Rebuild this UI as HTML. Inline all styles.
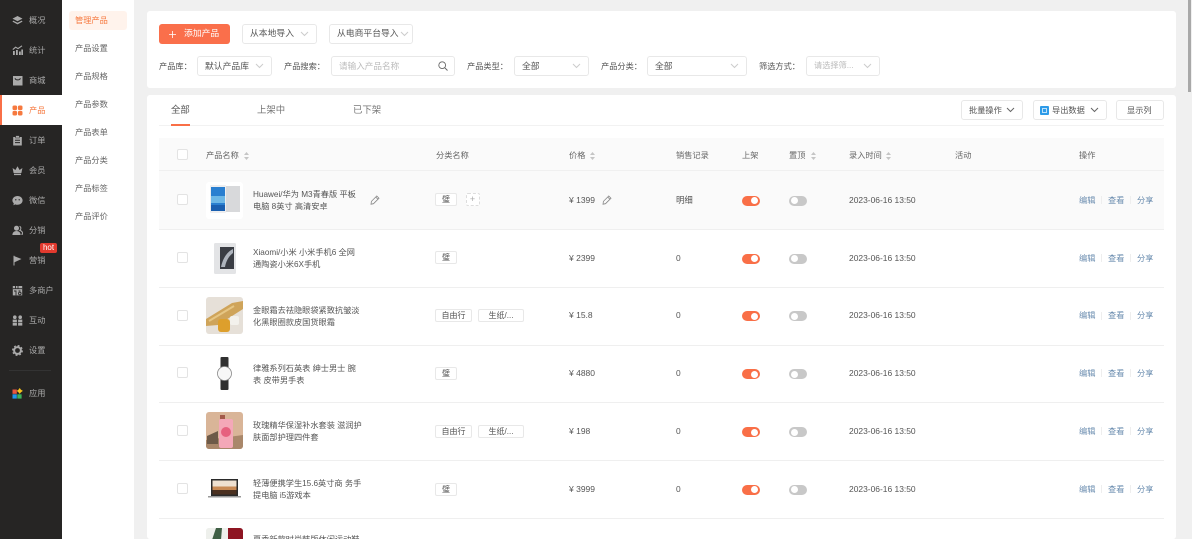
<!DOCTYPE html>
<html lang="zh">
<head>
<meta charset="utf-8">
<title>产品管理</title>
<style>
*{box-sizing:border-box}
html,body{margin:0;padding:0;width:1192px;height:539px;overflow:hidden}
body{position:relative;background:#f0f0f0;font-family:"Liberation Sans","Noto Sans CJK SC",sans-serif;font-size:8.4px;color:#555}
.a{position:absolute}
.t{position:absolute;white-space:nowrap;line-height:12px}
.side{position:absolute;left:0;top:0;width:62px;height:539px;background:#262524}
.ni{position:absolute;left:29px;font-size:8.2px;line-height:12px;color:#aaa;white-space:nowrap;margin-top:1px}
.ic{position:absolute;left:12px;width:11px;height:11px}
.sub{position:absolute;left:62px;top:0;width:72px;height:539px;background:#fff}
.si{position:absolute;left:75px;font-size:8.2px;line-height:12px;color:#666;white-space:nowrap;margin-top:1px}
.card{position:absolute;background:#fff;border-radius:3px}
.sel{position:absolute;height:20px;background:#fff;border:1px solid #e8e8e8;border-radius:3px;line-height:18px;padding-left:7px;font-size:8.8px;color:#555;white-space:nowrap}
.sel svg{position:absolute;right:7px;top:6px}
.lb{position:absolute;top:61px;line-height:12px;font-size:8.2px;color:#555;white-space:nowrap}
.th{position:absolute;top:150px;line-height:12px;font-size:8.2px;color:#666;white-space:nowrap}
.sort{position:absolute;top:152px;width:5px;height:8px}
.sep{position:absolute;left:159px;width:1005px;height:1px;background:#efefef}
.cb{position:absolute;left:177px;width:11px;height:11px;border:1px solid #e3e3e3;border-radius:2px;background:#fff}
.im{position:absolute;left:206px;width:37px;height:37px;border-radius:3px;overflow:hidden}
.nm{position:absolute;left:253px;line-height:12px;font-size:8.2px;color:#555;white-space:nowrap;margin-top:1px}
.tag{position:absolute;height:13px;border:1px solid #e8e8e8;border-radius:2px;background:#fff;line-height:11px;font-size:8px;color:#555;text-align:center;white-space:nowrap}
.pr{position:absolute;left:569px;line-height:12px;font-size:8.5px;color:#555;white-space:nowrap}
.sa{position:absolute;left:676px;line-height:12px;font-size:8.4px;color:#555}
.sw{position:absolute;width:17.5px;height:10px;border-radius:5px}
.sw i{position:absolute;top:1.5px;width:7px;height:7px;border-radius:50%;background:#fff}
.on{left:742px;background:#f96f47}.on i{right:1.5px}
.off{left:789px;background:#c8c8c8}.off i{left:1.5px}
.dt{position:absolute;left:849px;line-height:12px;font-size:8.45px;color:#555;white-space:nowrap}
.op{position:absolute;line-height:12px;font-size:8.2px;color:#6a8caf;white-space:nowrap;margin-top:1px}
.dv{position:absolute;width:1px;height:8px;background:#eee}
</style>
</head>
<body>

<div class="side"></div>
<svg class="ic" style="top:15px" viewBox="0 0 11 11"><path d="M5.5 1 10.5 3.6 5.5 6.2.5 3.6Z" fill="#aaa"/><path d="M1.2 5.6 5.5 7.8 9.8 5.6 10.5 6.6 5.5 9.4.5 6.6Z" fill="#aaa"/></svg>
<div class="ni" style="top:14px">概况</div>
<svg class="ic" style="top:45px" viewBox="0 0 11 11"><path d="M1 6h1.8v4H1zM4 5h1.8v5H4zM7 6.5h1.8V10H7zM9.3 4.5H11V10H9.3z" fill="#aaa"/><path d="M.8 4.6 3.6 2.2 6 3.6 10 .8" fill="none" stroke="#aaa" stroke-width="1.1"/></svg>
<div class="ni" style="top:44px">统计</div>
<svg class="ic" style="top:75px" viewBox="0 0 11 11"><path d="M1 1h9.5v9.5H1Z" fill="#aaa"/><path d="M3 3.2C3.6 5.4 7.8 5.4 8.4 3.2" fill="none" stroke="#262524" stroke-width="1"/></svg>
<div class="ni" style="top:74px">商城</div>

<div class="a" style="left:0;top:95px;width:62px;height:30px;background:#fff"></div>
<div class="a" style="left:0;top:95px;width:1.5px;height:30px;background:#f96f47"></div>
<svg class="ic" style="top:105px" viewBox="0 0 11 11"><g fill="#f6793f"><rect x=".5" y=".5" width="4.6" height="4.6" rx="1.6"/><rect x="5.9" y=".5" width="4.6" height="4.6" rx="1.6"/><rect x=".5" y="5.9" width="4.6" height="4.6" rx="1.6"/><rect x="5.9" y="5.9" width="4.6" height="4.6" rx="1.6"/></g></svg>
<div class="ni" style="top:104px;color:#f6793f">产品</div>

<svg class="ic" style="top:135px" viewBox="0 0 11 11"><path d="M1.2 2h8.6v8.5H1.2Z" fill="#aaa"/><rect x="3.6" y=".6" width="3.8" height="2.4" fill="#aaa" stroke="#262524" stroke-width=".5"/><path d="M3 5.2h5M3 7.6h5" stroke="#262524"/></svg>
<div class="ni" style="top:134px">订单</div>
<svg class="ic" style="top:165px" viewBox="0 0 11 11"><path d="M1.6 8 .6 3 3.4 5 5.5 1.2 7.6 5 10.4 3 9.4 8Z" fill="#aaa"/><rect x="2" y="8.7" width="7" height="1.4" fill="#aaa"/></svg>
<div class="ni" style="top:164px">会员</div>
<svg class="ic" style="top:195px" viewBox="0 0 11 11"><path d="M5.5 1C8.4 1 10.6 3 10.6 5.4S8.4 9.8 5.5 9.8C4.7 9.8 4 9.7 3.4 9.4L1.4 10.2 1.8 8.300C.9 7.500.4 6.500.4 5.400.4 3 2.600 1 5.500 1Z" fill="#aaa"/><circle cx="3.800" cy="4.800" r=".7" fill="#262524"/><circle cx="7.200" cy="4.800" r=".7" fill="#262524"/></svg>
<div class="ni" style="top:194px">微信</div>
<svg class="ic" style="top:225px" viewBox="0 0 11 11"><circle cx="4.500" cy="3.200" r="2.500" fill="#aaa"/><path d="M.4 10C.4 7.400 2.200 6 4.500 6S8.600 7.400 8.600 10Z" fill="#aaa"/><path d="M7.600 1.200A2.500 2.500 0 0 1 7.800 5.400C9.600 5.900 10.700 7.300 10.700 9.200H9.300" fill="none" stroke="#aaa"/></svg>
<div class="ni" style="top:224px">分销</div>
<svg class="ic" style="top:255px" viewBox="0 0 11 11"><path d="M1.500.8h1V10.500h-1Z" fill="#aaa"/><path d="M2.500 1.300 9.500 4 2.500 7.200Z" fill="#aaa"/></svg>
<div class="ni" style="top:254px">营销</div>
<div class="a" style="left:40px;top:243px;width:17px;height:10px;background:#e23a2e;border-radius:2px;color:#fff;font-size:8px;line-height:10px;text-align:center">hot</div>
<svg class="ic" style="top:285px" viewBox="0 0 11 11"><path d="M.8 1h9.400v9.400H.8Z" fill="#aaa"/><path d="M3.500 1v2.500M6 1v2.500M.8 3.700h9.400M4 10.400V6H2M6.500 6h2M6.500 8.500a1.300 1.300 0 1 0 2.600 0 1.300 1.300 0 1 0-2.600 0" fill="none" stroke="#262524" stroke-width=".9"/></svg>
<div class="ni" style="top:284px">多商户</div>
<svg class="ic" style="top:315px" viewBox="0 0 11 11"><g fill="#aaa"><circle cx="2.800" cy="2.200" r="1.800"/><circle cx="8.200" cy="2.200" r="1.800"/><rect x=".7" y="4.600" width="4.200" height="2.600"/><rect x="6.100" y="4.600" width="4.200" height="2.600"/><rect x=".7" y="7.800" width="4.200" height="2.800"/><rect x="6.100" y="7.800" width="4.200" height="2.800"/></g></svg>
<div class="ni" style="top:314px">互动</div>
<svg class="ic" style="top:345px" viewBox="0 0 11 11"><circle cx="5.500" cy="5.500" r="3.400" fill="none" stroke="#aaa" stroke-width="2"/><circle cx="5.500" cy="5.500" r="4.800" fill="none" stroke="#aaa" stroke-width="1.300" stroke-dasharray="1.900 1.870"/></svg>
<div class="ni" style="top:344px">设置</div>
<div class="a" style="left:9px;top:370px;width:42px;height:1px;background:#333"></div>
<svg class="ic" style="top:388px" viewBox="0 0 11 11"><rect x=".5" y="1.500" width="4.300" height="4.300" fill="#e8563f"/><rect x=".5" y="6.300" width="4.300" height="4.300" fill="#1f96ea"/><rect x="5.300" y="6.300" width="4.300" height="4.300" fill="#3cb35b"/><path d="M7.700 0 9 1.700 10.900 2.900 9 4.200 7.700 5.900 6.400 4.200 4.700 2.900 6.400 1.700Z" fill="#f7c21b"/></svg>
<div class="ni" style="top:387px">应用</div>

<div class="sub"></div>
<div class="a" style="left:69px;top:11px;width:58px;height:19px;background:#fff3ec;border-radius:3px"></div>
<div class="si" style="top:14px;color:#f6793f">管理产品</div>
<div class="si" style="top:42px">产品设置</div>
<div class="si" style="top:70px">产品规格</div>
<div class="si" style="top:98px">产品参数</div>
<div class="si" style="top:126px">产品表单</div>
<div class="si" style="top:154px">产品分类</div>
<div class="si" style="top:182px">产品标签</div>
<div class="si" style="top:210px">产品评价</div>

<div class="card" style="left:147px;top:11px;width:1029px;height:77px"></div>
<div class="card" style="left:147px;top:95px;width:1029px;height:444px"></div>
<div class="a" style="left:1188px;top:0;width:3px;height:92px;background:#a8a8a8"></div>

<div class="a" style="left:159px;top:24px;width:71px;height:20px;background:#fa6f4b;border-radius:3px;color:#fff;line-height:19px;font-size:8.8px"><svg class="a" style="left:10px;top:7px" width="7" height="7" viewBox="0 0 7 7"><path d="M3.500 0V7M0 3.500H7" stroke="#fff" stroke-width=".8"/></svg><span class="a" style="left:25px;top:0;white-space:nowrap">添加产品</span></div>
<div class="sel" style="left:242px;top:24px;width:75px;line-height:17px">从本地导入<svg width="9" height="6" viewBox="0 0 9 6"><path d="M1 1 4.500 4.500 8 1" fill="none" stroke="#ccc"/></svg></div>
<div class="sel" style="left:329px;top:24px;width:84px;line-height:17px">从电商平台导入<svg style="right:3px" width="9" height="6" viewBox="0 0 9 6"><path d="M1 1 4.500 4.500 8 1" fill="none" stroke="#ccc"/></svg></div>

<div class="lb" style="left:159px">产品库：</div>
<div class="sel" style="left:197px;top:56px;width:75px">默认产品库<svg width="9" height="6" viewBox="0 0 9 6"><path d="M1 1 4.500 4.500 8 1" fill="none" stroke="#ccc"/></svg></div>
<div class="lb" style="left:284px">产品搜索：</div>
<div class="sel" style="left:331px;top:56px;width:124px;color:#bbb;font-size:8.600px">请输入产品名称<svg style="right:6px;top:4px" width="10" height="10" viewBox="0 0 10 10"><circle cx="4.200" cy="4.200" r="3.400" fill="none" stroke="#666" stroke-width=".9"/><path d="M6.700 6.700 9.500 9.500" stroke="#666"/></svg></div>
<div class="lb" style="left:467px">产品类型：</div>
<div class="sel" style="left:514px;top:56px;width:75px">全部<svg width="9" height="6" viewBox="0 0 9 6"><path d="M1 1 4.500 4.500 8 1" fill="none" stroke="#ccc"/></svg></div>
<div class="lb" style="left:601px">产品分类：</div>
<div class="sel" style="left:647px;top:56px;width:100px">全部<svg width="9" height="6" viewBox="0 0 9 6"><path d="M1 1 4.500 4.500 8 1" fill="none" stroke="#ccc"/></svg></div>
<div class="lb" style="left:759px">筛选方式：</div>
<div class="sel" style="left:806px;top:56px;width:74px;color:#bbb;font-size:8.200px">请选择筛...<svg width="9" height="6" viewBox="0 0 9 6"><path d="M1 1 4.500 4.500 8 1" fill="none" stroke="#ccc"/></svg></div>

<div class="t" style="left:171px;top:104px;font-size:9.400px;color:#555">全部</div>
<div class="t" style="left:257px;top:104px;font-size:9.400px;color:#777">上架中</div>
<div class="t" style="left:353px;top:104px;font-size:9.400px;color:#777">已下架</div>
<div class="a" style="left:159px;top:125px;width:1005px;height:1px;background:#f2f2f2"></div>
<div class="a" style="left:171px;top:124px;width:19px;height:1.500px;background:#f96f47"></div>

<div class="sel" style="left:961px;top:100px;width:62px;font-size:8.200px;line-height:19px">批量操作<svg width="9" height="6" viewBox="0 0 9 6"><path d="M1 1 4.500 4.500 8 1" fill="none" stroke="#666"/></svg></div>
<div class="sel" style="left:1033px;top:100px;width:74px;padding-left:18px;font-size:8.200px;line-height:19px">导出数据<svg width="9" height="6" viewBox="0 0 9 6"><path d="M1 1 4.500 4.500 8 1" fill="none" stroke="#666"/></svg></div>
<div class="a" style="left:1040px;top:106px;width:9px;height:9px;background:#2e9be8;border-radius:1px"><div class="a" style="left:2px;top:2px;width:5px;height:5px;border:1px solid #bfe2fb"></div></div>
<div class="sel" style="left:1116px;top:100px;width:48px;padding-left:10px;font-size:8.200px;line-height:19px">显示列</div>

<div class="a" style="left:159px;top:138px;width:1005px;height:33px;background:#fafafa;border-bottom:1px solid #f0f0f0"></div>
<div class="cb" style="top:149px"></div>
<div class="th" style="left:206px">产品名称</div>
<svg class="sort" style="left:244px" viewBox="0 0 5 8"><path d="M2.500 0 5 3H0ZM2.500 8 0 5h5Z" fill="#c5c5c5"/></svg>
<div class="th" style="left:436px">分类名称</div>
<div class="th" style="left:569px">价格</div>
<svg class="sort" style="left:590px" viewBox="0 0 5 8"><path d="M2.500 0 5 3H0ZM2.500 8 0 5h5Z" fill="#c5c5c5"/></svg>
<div class="th" style="left:676px">销售记录</div>
<div class="th" style="left:742px">上架</div>
<div class="th" style="left:789px">置顶</div>
<svg class="sort" style="left:811px" viewBox="0 0 5 8"><path d="M2.500 0 5 3H0ZM2.500 8 0 5h5Z" fill="#c5c5c5"/></svg>
<div class="th" style="left:849px">录入时间</div>
<svg class="sort" style="left:886px" viewBox="0 0 5 8"><path d="M2.500 0 5 3H0ZM2.500 8 0 5h5Z" fill="#c5c5c5"/></svg>
<div class="th" style="left:955px">活动</div>
<div class="th" style="left:1079px">操作</div>

<!-- Row 1 -->
<div class="a" style="left:159px;top:171px;width:1005px;height:58px;background:#fafafa"></div>
<div class="sep" style="top:228.500px"></div>
<div class="cb" style="top:194px"></div>
<div class="im" style="top:182px;background:#fff"><svg width="37" height="37" viewBox="0 0 37 37"><rect x="19" y="4" width="15" height="26" fill="#d8d9db"/><rect x="4" y="3" width="16" height="28" rx="1" fill="#eeeeef"/><rect x="5" y="5" width="14" height="24" fill="#2a7fd0"/><rect x="5" y="14" width="14" height="7" fill="#6db7e6"/><rect x="5" y="23" width="14" height="6" fill="#1a5fb0"/></svg></div>
<div class="nm" style="top:188px">Huawei/华为 M3青春版 平板<br>电脑 8英寸 高清安卓</div>
<svg class="a" style="left:370px;top:195px" width="10" height="10" viewBox="0 0 10 10"><path d="M6.800 1 9 3.200 3.500 8.700 1 9.200 1.400 6.400ZM5.800 2.100 7.900 4.200" fill="none" stroke="#888" stroke-width=".8"/></svg>
<div class="tag" style="left:435px;top:193px;width:22px">璧</div>
<div class="tag" style="left:465.500px;top:193px;width:14px;border:1px dashed #ddd;color:#aaa;font-size:9px">+</div>
<div class="pr" style="top:194px">¥ 1399</div>
<svg class="a" style="left:601.500px;top:195px" width="10" height="10" viewBox="0 0 10 10"><path d="M6.800 1 9 3.200 3.500 8.700 1 9.200 1.400 6.400ZM5.800 2.100 7.900 4.200" fill="none" stroke="#888" stroke-width=".8"/></svg>
<div class="sa" style="top:194px">明细</div>
<div class="sw on" style="top:195.500px"><i></i></div>
<div class="sw off" style="top:195.500px"><i></i></div>
<div class="dt" style="top:194px">2023-06-16 13:50</div>
<div class="op" style="left:1079px;top:194px">编辑</div><div class="dv" style="left:1101px;top:196px"></div><div class="op" style="left:1108px;top:194px">查看</div><div class="dv" style="left:1130px;top:196px"></div><div class="op" style="left:1137px;top:194px">分享</div>

<!-- Row 2 -->
<div class="sep" style="top:286.500px"></div>
<div class="cb" style="top:252px"></div>
<div class="im" style="top:240px"><svg width="37" height="37" viewBox="0 0 37 37"><rect x="7" y="2" width="23" height="33" fill="#fff"/><rect x="8" y="3" width="22" height="31" rx="1.500" fill="#e3e4e6"/><rect x="14" y="7" width="14" height="22" fill="#3a3d44"/><path d="M15 27C17 18 21 12 27 9L27 13C23 16 20 21 19 27Z" fill="#aeb4bd"/></svg></div>
<div class="nm" style="top:246px">Xiaomi/小米 小米手机6 全网<br>通陶瓷小米6X手机</div>
<div class="tag" style="left:435px;top:251px;width:22px">璧</div>
<div class="pr" style="top:252px">¥ 2399</div>
<div class="sa" style="top:252px">0</div>
<div class="sw on" style="top:253.500px"><i></i></div>
<div class="sw off" style="top:253.500px"><i></i></div>
<div class="dt" style="top:252px">2023-06-16 13:50</div>
<div class="op" style="left:1079px;top:252px">编辑</div><div class="dv" style="left:1101px;top:254px"></div><div class="op" style="left:1108px;top:252px">查看</div><div class="dv" style="left:1130px;top:254px"></div><div class="op" style="left:1137px;top:252px">分享</div>

<!-- Row 3 -->
<div class="sep" style="top:344.500px"></div>
<div class="cb" style="top:310px"></div>
<div class="im" style="top:297px;background:#e6e0d8"><svg width="37" height="37" viewBox="0 0 37 37"><path d="M0 22 26 6 37 4V12L12 28 0 29Z" fill="#cfa45a"/><path d="M3 24 28 9" stroke="#e6c684" stroke-width="2"/><rect x="12" y="22" width="12" height="13" rx="3" fill="#dd9f2c"/><rect x="24" y="19" width="9" height="9" rx="2" fill="#f3f1ec"/></svg></div>
<div class="nm" style="top:304px">金眼霜去祛隐眼袋紧致抗皱淡<br>化黑眼圈款皮国货眼霜</div>
<div class="tag" style="left:435px;top:309px;width:37px">自由行</div>
<div class="tag" style="left:478px;top:309px;width:46px">生纸/...</div>
<div class="pr" style="top:309px">¥ 15.8</div>
<div class="sa" style="top:309px">0</div>
<div class="sw on" style="top:311px"><i></i></div>
<div class="sw off" style="top:311px"><i></i></div>
<div class="dt" style="top:309px">2023-06-16 13:50</div>
<div class="op" style="left:1079px;top:309px">编辑</div><div class="dv" style="left:1101px;top:312px"></div><div class="op" style="left:1108px;top:309px">查看</div><div class="dv" style="left:1130px;top:312px"></div><div class="op" style="left:1137px;top:309px">分享</div>

<!-- Row 4 -->
<div class="sep" style="top:402px"></div>
<div class="cb" style="top:367px"></div>
<div class="im" style="top:355px"><svg width="37" height="37" viewBox="0 0 37 37"><rect x="14.500" y="2" width="8" height="33" rx="1" fill="#303030"/><circle cx="18.500" cy="18.500" r="7" fill="#f7f7f7" stroke="#888" stroke-width=".8"/></svg></div>
<div class="nm" style="top:362px">律雅系列石英表 绅士男士 腕<br>表 皮带男手表</div>
<div class="tag" style="left:435px;top:367px;width:22px">璧</div>
<div class="pr" style="top:367px">¥ 4880</div>
<div class="sa" style="top:367px">0</div>
<div class="sw on" style="top:369px"><i></i></div>
<div class="sw off" style="top:369px"><i></i></div>
<div class="dt" style="top:367px">2023-06-16 13:50</div>
<div class="op" style="left:1079px;top:367px">编辑</div><div class="dv" style="left:1101px;top:369px"></div><div class="op" style="left:1108px;top:367px">查看</div><div class="dv" style="left:1130px;top:369px"></div><div class="op" style="left:1137px;top:367px">分享</div>

<!-- Row 5 -->
<div class="sep" style="top:460px"></div>
<div class="cb" style="top:425px"></div>
<div class="im" style="top:412px;background:#d9b598"><svg width="37" height="37" viewBox="0 0 37 37"><path d="M0 28 37 23V37H0Z" fill="#a9876a"/><rect x="14" y="3" width="5" height="5" fill="#a35a4a"/><rect x="13" y="7" width="14" height="29" rx="2" fill="#f4a8b8"/><circle cx="20" cy="20" r="5" fill="#e6617f"/><path d="M1 24 12 19V32H1Z" fill="#6d5a48"/></svg></div>
<div class="nm" style="top:419px">玫瑰精华保湿补水套装 滋润护<br>肤面部护理四件套</div>
<div class="tag" style="left:435px;top:425px;width:37px">自由行</div>
<div class="tag" style="left:478px;top:425px;width:46px">生纸/...</div>
<div class="pr" style="top:425px">¥ 198</div>
<div class="sa" style="top:425px">0</div>
<div class="sw on" style="top:427px"><i></i></div>
<div class="sw off" style="top:427px"><i></i></div>
<div class="dt" style="top:425px">2023-06-16 13:50</div>
<div class="op" style="left:1079px;top:425px">编辑</div><div class="dv" style="left:1101px;top:427px"></div><div class="op" style="left:1108px;top:425px">查看</div><div class="dv" style="left:1130px;top:427px"></div><div class="op" style="left:1137px;top:425px">分享</div>

<!-- Row 6 -->
<div class="sep" style="top:517.500px"></div>
<div class="cb" style="top:483px"></div>
<div class="im" style="top:470px"><svg width="37" height="37" viewBox="0 0 37 37"><rect x="5" y="9" width="27" height="17" fill="#2a2a2a"/><rect x="6.500" y="10.500" width="24" height="14" fill="#c88a55"/><rect x="6.500" y="10.500" width="24" height="6" fill="#eee0d0"/><rect x="6.500" y="20" width="24" height="4.500" fill="#4a3020"/><rect x="2" y="26" width="33" height="1.500" fill="#999"/></svg></div>
<div class="nm" style="top:477px">轻薄便携学生15.6英寸商 务手<br>提电脑 i5游戏本</div>
<div class="tag" style="left:435px;top:483px;width:22px">璧</div>
<div class="pr" style="top:483px">¥ 3999</div>
<div class="sa" style="top:483px">0</div>
<div class="sw on" style="top:484.500px"><i></i></div>
<div class="sw off" style="top:484.500px"><i></i></div>
<div class="dt" style="top:483px">2023-06-16 13:50</div>
<div class="op" style="left:1079px;top:483px">编辑</div><div class="dv" style="left:1101px;top:485px"></div><div class="op" style="left:1108px;top:483px">查看</div><div class="dv" style="left:1130px;top:485px"></div><div class="op" style="left:1137px;top:483px">分享</div>

<!-- Row 7 partial -->
<div class="im" style="top:528px;height:11px;border-radius:3px 3px 0 0;background:#eef0ec"><svg width="37" height="37" viewBox="0 0 37 37" style="display:block"><rect x="0" y="0" width="22" height="37" fill="#eef0ec"/><path d="M10 0 16 0 15 12 6 12Z" fill="#3f5f45"/><rect x="22" y="0" width="15" height="37" fill="#8e1522"/></svg></div>
<div class="nm" style="top:533px">夏季新款时尚韩版休闲运动鞋</div>

</body>
</html>
